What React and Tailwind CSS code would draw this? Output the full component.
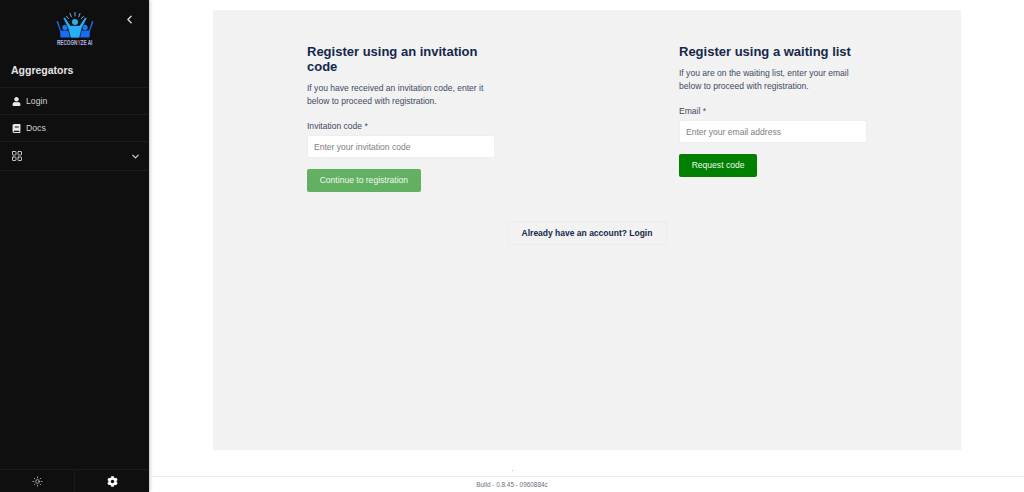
import { ChevronDown, ChevronLeft, LayoutGrid, Sun } from "lucide-react";
import { FaBook, FaCog, FaUser } from "react-icons/fa";

function Logo() {
  return (
    <div className="flex flex-col items-center">
      <svg width="38" height="26" viewBox="0 0 38 26" fill="none">
        <g stroke="#6fb4e6" strokeWidth="1" strokeLinecap="round">
          <path d="M19 0.5v3.5" />
          <path d="M14 1.5l1.3 3.2" />
          <path d="M24 1.5l-1.3 3.2" />
          <path d="M10.5 4.5l2.2 2" />
          <path d="M27.5 4.5l-2.2 2" />
        </g>
        <circle cx="9" cy="15.5" r="2.7" fill="#1c78ee" />
        <circle cx="29" cy="15.5" r="2.7" fill="#1c78ee" />
        <path d="M0.5 9.5l1.5-.5 3 9.5h8l1 7H4.500l-.5-6.500z" fill="#1a6cf0" />
        <path d="M37.500 9.500l-1.500-.5-3 9.500h-8l-1 7h9.500l.5-6.500z" fill="#1a6cf0" />
        <path
          d="M7 6l2-.8 5.500 8.300h9L29 5.200l2 .8-5 10-2.500 10h-9L12 16z"
          fill="#27aef5"
          stroke="#0f0f0f"
          strokeWidth="0.6"
        />
        <circle cx="19" cy="10" r="3" fill="#27aef5" />
      </svg>
      <span className="mt-[1px] text-[6.5px] leading-[8px] font-bold text-[#b0bdec] scale-x-[0.72] whitespace-nowrap">
        RECOGN<span className="text-[#e2574c]">Y</span>ZE AI
      </span>
    </div>
  );
}

function Sidebar() {
  return (
    <aside className="w-[149px] shrink-0 h-screen bg-[#0f0f0f] flex flex-col shadow-[1px_0_3px_rgba(0,0,0,0.25)] text-[#d4d4d4]">
      <div className="h-[55px] relative flex justify-center pt-[12px]">
        <Logo />
        <ChevronLeft className="absolute left-[123px] top-[13px] text-[#d8d8d8]" size={13} strokeWidth={2.5} />
      </div>
      <div className="h-[33px] pb-[1px] px-[11px] flex items-center border-b border-[#1b1b1b] text-[10.5px] font-bold text-[#e5e5e5]">
        Aggregators
      </div>
      <div className="h-[27px] pl-[12px] flex items-center gap-[5px] border-b border-[#1b1b1b] text-[8.7px]">
        <FaUser size={9} className="text-[#e8e8e8]" />
        <span className="pt-[1px]">Login</span>
      </div>
      <div className="h-[27px] pl-[12px] flex items-center gap-[5px] border-b border-[#1b1b1b] text-[8.7px]">
        <FaBook size={9} className="text-[#e8e8e8]" />
        <span className="pt-[1px]">Docs</span>
      </div>
      <div className="h-[29px] pl-[11px] pr-[8px] flex items-center justify-between border-b border-[#1b1b1b]">
        <LayoutGrid size={12} strokeWidth={1.7} className="text-[#e0e0e0]" />
        <ChevronDown size={11} strokeWidth={2.5} className="text-[#d8d8d8]" />
      </div>
      <div className="mt-auto h-[23px] flex border-t border-[#1b1b1b]">
        <div className="flex-1 flex items-center justify-center border-r border-[#1b1b1b]">
          <Sun size={11} strokeWidth={1.8} className="text-[#bdbdbd]" />
        </div>
        <div className="flex-1 flex items-center justify-center">
          <FaCog size={11} className="text-white" />
        </div>
      </div>
    </aside>
  );
}

function RegisterForm({ title, text, label, placeholder, button, buttonClass }) {
  return (
    <div className="w-[188px]">
      <h2 className="text-[13px] leading-[15px] font-bold text-[#14284b]">{title}</h2>
      <p className="mt-[8px] text-[8.55px] leading-[13px] text-[#3d4a63]">{text}</p>
      <label className="block mt-[12px] text-[8.55px] leading-[13px] text-[#3d4a63]">{label} *</label>
      <input
        placeholder={placeholder}
        className="block mt-[2px] w-full h-[23px] px-[6px] bg-white rounded-[2px] border border-[#eeeeee] text-[8.55px] placeholder:text-[#808080] outline-none"
      />
      <button className={`block mt-[11px] h-[22.5px] px-[12.7px] rounded-[2px] text-[8.55px] text-[#f1f8f1] ${buttonClass}`}>
        {button}
      </button>
    </div>
  );
}

export default function App() {
  return (
    <div className="flex h-screen bg-white overflow-hidden font-['Liberation_Sans',Arial,sans-serif]">
      <Sidebar />
      <main className="flex-1 flex flex-col min-w-0">
        <div className="flex-1 pt-[10px] pl-[64px] pr-[63px]">
          <section className="h-[440px] bg-[#f2f2f2] pt-[34px]">
            <div className="flex justify-center gap-[184px]">
              <RegisterForm
                title="Register using an invitation code"
                text="If you have received an invitation code, enter it below to proceed with registration."
                label="Invitation code"
                placeholder="Enter your invitation code"
                button="Continue to registration"
                buttonClass="bg-[#62b062]"
              />
              <RegisterForm
                title="Register using a waiting list"
                text="If you are on the waiting list, enter your email below to proceed with registration."
                label="Email"
                placeholder="Enter your email address"
                button="Request code"
                buttonClass="bg-[#008000]"
              />
            </div>
            <div className="flex justify-center mt-[29.5px]">
              <button className="w-[159px] h-[24px] pt-[1px] border border-[#eaeced] rounded-[2px] text-[8.5px] font-bold text-[#14284b]">
                Already have an account? Login
              </button>
            </div>
          </section>
          <div className="mt-[20px] ml-[299px] w-px h-px bg-[#bdbdbd]" />
        </div>
        <footer className="h-[16px] pr-[149px] border-t border-[#ececec] flex items-center justify-center text-[6.4px] text-[#6b7280]">
          Build - 0.8.45 - 0960884c
        </footer>
      </main>
    </div>
  );
}
